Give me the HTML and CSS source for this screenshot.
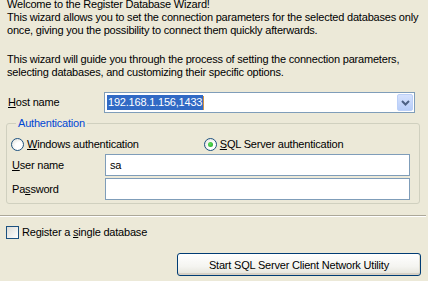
FILE: index.html
```html
<!DOCTYPE html>
<html lang="en">
<head>
    <meta charset="UTF-8">
    <title>Register Database Wizard</title>
    <link rel="stylesheet" href="styles.css">
</head>
<body>
    <div class="page">
        <div class="intro">
            <p>Welcome to the Register Database Wizard!<br>
            This wizard allows you to set the connection parameters for the selected databases only<br>
            once, giving you the possibility to connect them quickly afterwards.</p>
            <p class="second">This wizard will guide you through the process of setting the connection parameters,<br>
            selecting databases, and customizing their specific options.</p>
        </div>

        <div class="host-row">
            <label class="host-label"><u>H</u>ost name</label>
            <div class="combo">
                <span class="combo-text"><span class="selected">192.168.1.156,1433</span><span class="caret"></span></span>
                <span class="combo-btn">
                    <svg width="9" height="6" viewBox="0 0 9 6"><path d="M1 1 L4.5 4.5 L8 1" fill="none" stroke="#4d6185" stroke-width="2"/></svg>
                </span>
            </div>
        </div>

        <fieldset class="group">
            <legend>Authentication</legend>
            <div class="radios">
                <label class="radio"><span class="dot"></span><span><u>W</u>indows authentication</span></label>
                <label class="radio checked"><span class="dot"></span><span><u>S</u>QL Server authentication</span></label>
            </div>
            <div class="field">
                <label><u>U</u>ser name</label>
                <div class="textbox">sa</div>
            </div>
            <div class="field">
                <label>Pa<u>s</u>sword</label>
                <div class="textbox"></div>
            </div>
        </fieldset>

        <div class="separator"></div>

        <label class="check"><span class="box"></span><span>Register a <u>s</u>ingle database</span></label>

        <div class="actions">
            <button class="xp-button">Start SQL Server Client Network Utility</button>
        </div>
    </div>
</body>
</html>
```

FILE: styles.css
```css
body {
    margin: 0;
    background-color: #ece9d8;
    font-family: "Liberation Sans", Arial, sans-serif;
    font-size: 11px;
    line-height: 13px;
    letter-spacing: -0.2px;
    color: #000;
    overflow: hidden;
}

u {
    text-decoration: underline;
    text-underline-offset: 1px;
}

.page {
    width: 428px;
    height: 281px;
}

.intro {
    margin-top: -2px;
    padding-left: 7px;
    white-space: nowrap;
}

.intro p {
    margin: 0;
}

.intro .second {
    margin-top: 16px;
}

.host-row {
    display: flex;
    align-items: center;
    margin-top: 13px;
    padding-left: 8px;
}

.host-label {
    width: 96px;
}

.combo {
    display: flex;
    align-items: center;
    width: 309px;
    height: 19px;
    border: 1px solid #7f9db9;
    background: #fff;
}

.combo-text {
    flex: 1;
    display: flex;
    align-items: center;
    padding-left: 2px;
}

.selected {
    background: #316ac5;
    color: #fff;
    padding: 1px;
}

.caret {
    width: 1px;
    height: 14px;
    background: #ce9443;
}

.combo-btn {
    width: 16px;
    height: 17px;
    margin-right: 1px;
    display: flex;
    align-items: center;
    justify-content: center;
    border-radius: 2px;
    background: linear-gradient(#d6e2fd, #b7cdf9);
    border: 1px solid #bcd0f8;
    box-sizing: border-box;
}

.group {
    margin: 4px 8px 0 6px;
    padding: 6px 0 3px 4px;
    border: 1px solid #d0d0bf;
    border-radius: 3px;
}

.group legend {
    margin-left: 5px;
    padding: 0 2px;
    color: #0046d5;
}

.radios {
    display: flex;
    height: 16px;
    align-items: center;
    margin-bottom: 2px;
}

.radio {
    display: flex;
    align-items: center;
    gap: 3px;
}

.radio + .radio {
    margin-left: 65px;
}

.dot {
    width: 13px;
    height: 13px;
    box-sizing: border-box;
    border: 1px solid #1c5180;
    border-radius: 50%;
    background: radial-gradient(circle at 65% 65%, #fff 0, #fff 35%, #dcdcd5 100%);
    position: relative;
}

.checked .dot::after {
    content: "";
    position: absolute;
    left: 3px;
    top: 3px;
    width: 5px;
    height: 5px;
    border-radius: 50%;
    background: radial-gradient(circle at 40% 40%, #5ee25e, #21a121);
}

.field {
    display: flex;
    align-items: center;
    margin-top: 2px;
    padding-left: 1px;
}

.field label {
    width: 93px;
}

.textbox {
    width: 299px;
    height: 20px;
    border: 1px solid #7f9db9;
    background: #fff;
    padding-left: 4px;
    display: flex;
    align-items: center;
}

.separator {
    margin-top: 11px;
    height: 0;
    border-top: 1px solid #aca899;
    border-bottom: 1px solid #fff;
    margin-right: 2px;
}

.check {
    display: flex;
    align-items: center;
    gap: 3px;
    margin: 9px 0 0 6px;
}

.box {
    width: 13px;
    height: 13px;
    box-sizing: border-box;
    border: 1px solid #1c5180;
    background: linear-gradient(135deg, #dcdcd7, #fff);
}

.actions {
    display: flex;
    justify-content: flex-end;
    margin-top: 14px;
    padding-right: 7px;
}

.xp-button {
    width: 244px;
    height: 23px;
    border: 1px solid #003c74;
    border-radius: 3px;
    background: linear-gradient(#fff 0, #f4f4f0 60%, #e3e2d9 100%);
    box-shadow: inset 0 -2px 0 #d6d0c5, inset -1px 0 0 #e0ddd0;
    font-family: "Liberation Sans", Arial, sans-serif;
    font-size: 11px;
    letter-spacing: -0.2px;
    color: #000;
    padding: 0;
}
```
